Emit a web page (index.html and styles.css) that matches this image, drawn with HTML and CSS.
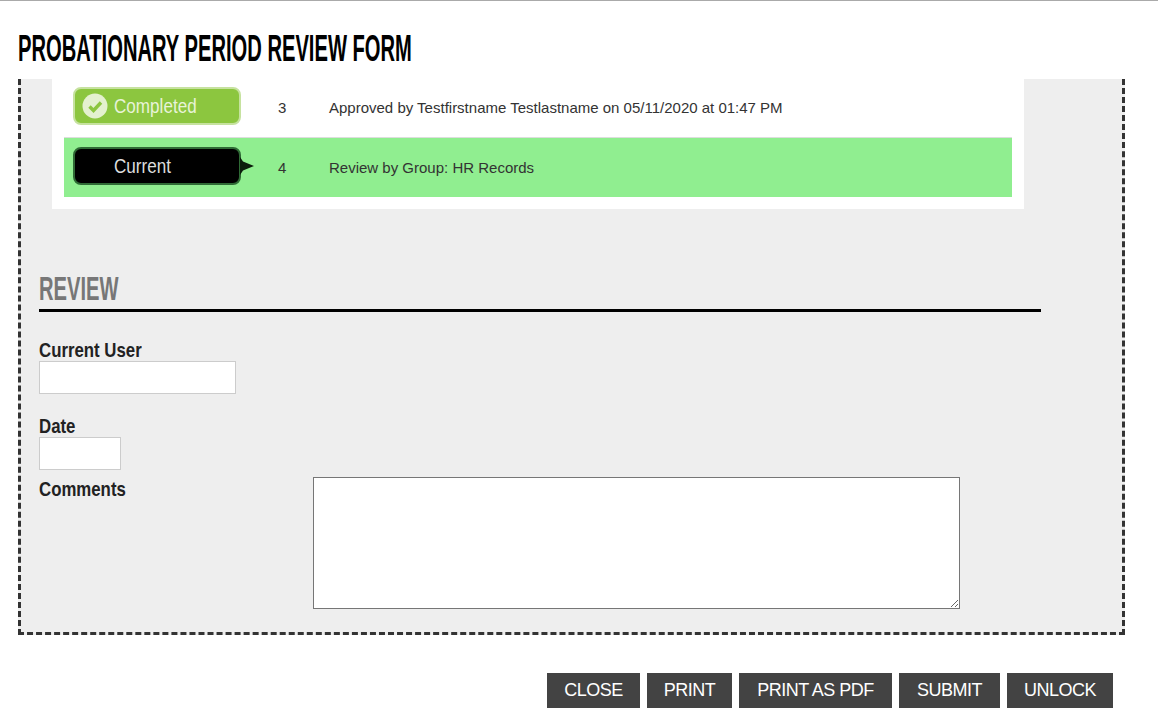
FILE: index.html
```html
<!DOCTYPE html>
<html lang="en">
<head>
<meta charset="utf-8">
<title>Probationary Period Review Form</title>
<link rel="stylesheet" href="styles.css">
</head>
<body>
<header class="page-head"><h1 class="page-title"><span>PROBATIONARY PERIOD REVIEW FORM</span></h1></header>
<main class="panel">
  <section class="steps">
    <div class="step step-done">
      <div class="badge-cell">
        <span class="badge badge-green">
          <svg class="check" viewBox="0 0 26 26" width="26" height="26"><circle cx="13" cy="13" r="12.5" fill="#e4f1cf"/><path d="M7.5 13.5l4 4 7.5-8" fill="none" stroke="#8cc63f" stroke-width="3.4"/></svg>
          <span class="badge-text">Completed</span>
        </span>
      </div>
      <div class="step-num step-num-done">3</div>
      <div class="step-desc step-desc-done">Approved by Testfirstname Testlastname on 05/11/2020 at 01:47 PM</div>
    </div>
    <div class="step step-current">
      <div class="badge-cell">
        <span class="badge badge-black"><span class="badge-text badge-text-current">Current</span></span>
        <svg class="pointer" viewBox="0 0 14 18" width="14" height="18"><path d="M0 0L3 4.5L14 9L3 13.5L0 18Z" fill="#0c1c0c"/></svg>
      </div>
      <div class="step-num">4</div>
      <div class="step-desc">Review by Group: HR Records</div>
    </div>
  </section>
  <section class="review">
    <h2 class="review-title"><span>REVIEW</span></h2>
    <div class="field">
      <label class="field-label"><span>Current User</span></label>
      <input class="input input-user" type="text">
    </div>
    <div class="field">
      <label class="field-label"><span>Date</span></label>
      <input class="input input-date" type="text">
    </div>
    <div class="comments">
      <label class="field-label comments-label"><span>Comments</span></label>
      <textarea class="comments-box"></textarea>
    </div>
  </section>
</main>
<footer class="actions">
  <button class="btn btn-close">CLOSE</button>
  <button class="btn btn-print">PRINT</button>
  <button class="btn btn-pdf">PRINT AS PDF</button>
  <button class="btn btn-submit">SUBMIT</button>
  <button class="btn btn-unlock">UNLOCK</button>
</footer>
</body>
</html>
```
FILE: styles.css
```css
* { box-sizing: border-box; }
html, body { margin: 0; padding: 0; }
body {
  width: 1158px; height: 712px; overflow: hidden; background: #fff;
  border-top: 1px solid #aaa; font-family: "Liberation Sans", Arial, sans-serif; color: #333;
}
.page-head { height: 78px; padding: 30px 0 0 18px; }
.page-title { margin: 0; font: 700 24px/36px "Liberation Sans", sans-serif; color: #000; }
.page-title span { display: inline-block; white-space: nowrap; transform-origin: left center; transform: scale(0.84, 1.5); }
.panel {
  width: 1107px; height: 556px; margin-left: 18px; background: #eee;
  border: 3px dashed #333; border-top: 0;
}
.steps { width: 972px; height: 130px; background: #fff; padding: 0 12px; margin-left: 31px; }
.step { display: flex; align-items: center; width: 948px; font-size: 15px; }
.step-done { height: 58px; }
.step-current { height: 60px; background: #90ee90; border-top: 1px solid #ddd; }
.badge-cell { width: 214px; padding-left: 9px; display: flex; align-items: center; flex: none; }
.step-done .badge-cell { margin-top: -4px; }
.step-current .badge-cell { margin-top: -3px; }
.step-num-done, .step-desc-done { margin-top: -2px; }
.badge { display: flex; align-items: center; width: 168px; height: 38px; border-radius: 8px; }
.badge-green { background: #8cc63f; border: 2px solid #c6e29f; padding-left: 7px; }
.badge-black { background: #000; border: 2px solid #2f6a35; padding-left: 33px; }
.check { flex: none; }
.badge-text { font: 400 15px/20px "Liberation Sans", sans-serif; color: #e8f3d8; margin-left: 6px; display: inline-block; transform-origin: left center; transform: scale(1.14, 1.3); }
.badge-text-current { color: #ddd; }
.pointer { margin-left: -1px; flex: none; }
.step-num { width: 51px; flex: none; }
.step-desc { white-space: nowrap; }
.review { padding: 62px 0 0 18px; }
.review-title { margin: 0; width: 1002px; height: 41px; border-bottom: 3px solid #000; font: 700 24px/36px "Liberation Sans", sans-serif; color: #777; }
.review-title span { display: inline-block; transform-origin: left center; transform: scale(0.84, 1.4); }
.field { display: flex; flex-direction: column; align-items: flex-start; }
.field-label { font: 700 16px/20px "Liberation Sans", sans-serif; color: #222; height: 20px; }
.field-label span { display: inline-block; transform-origin: left center; transform: scale(1.05, 1.22); white-space: nowrap; }
.input { height: 33px; background: #fff; border: 1px solid #ccc; padding: 0; border-radius: 0; display: block; }
.input-user { width: 197px; margin-bottom: 23px; }
.input-date { width: 82px; }
.review-title + .field { margin-top: 29px; }
.comments { display: flex; margin-top: 7px; align-items: flex-start; }
.comments-label { width: 274px; flex: none; margin-top: 3px; }
.comments-box { width: 647px; height: 132px; background: #fff; border: 1px solid #767676; display: block; margin: 0; padding: 0; border-radius: 0; }
.actions { display: flex; gap: 7px; padding: 38px 0 0 547px; }
.btn { height: 35px; background: #434343; color: #fff; border: 0; padding: 0; font: 400 18px "Liberation Sans", Arial, sans-serif; letter-spacing: -0.5px; border-radius: 0; }
.btn-close { width: 93px; }
.btn-print { width: 85px; }
.btn-pdf { width: 153px; }
.btn-submit { width: 101px; }
.btn-unlock { width: 106px; }
```
